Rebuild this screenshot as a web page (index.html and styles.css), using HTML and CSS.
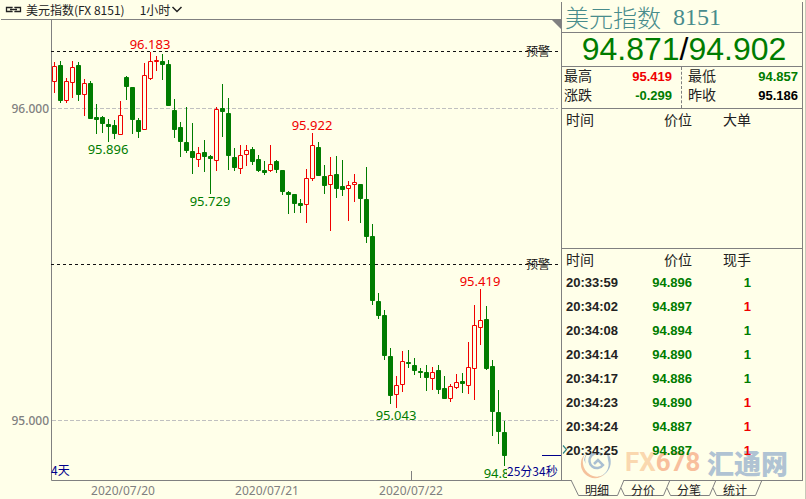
FILE: index.html
```html
<!DOCTYPE html>
<html lang="zh-CN">
<head>
  <meta charset="UTF-8">
  <meta name="viewport" content="width=device-width, initial-scale=1.0">
  <title>美元指数(FX 8151)</title>
  <link rel="stylesheet" href="styles.css">
</head>
<body>
  <div class="terminal">
    <main class="chart">
      <header class="chart-header">
        <svg class="link-icon" width="17" height="7" viewBox="0 0 17 7">
          <path d="M7 2V1.500H1.500V5.500H7V5M10 2V1.500H15.500V5.500H10V5M5 3.500H12" fill="none" stroke="#222" stroke-width="1.300"/>
        </svg>
        <span>美元指数(FX 8151)</span>
        <label class="period">
          <select class="period-select" aria-label="周期">
            <option>1小时</option>
          </select>
          <svg width="12" height="7" viewBox="0 0 12 7">
            <path d="M1.500 1L6 5.500L10.500 1" fill="none" stroke="#222" stroke-width="1.500"/>
          </svg>
        </label>
      </header>

      <svg class="plot" viewBox="0 20 561 479">
        <path class="axis" d="M51.500 20V480.500H561"/>
        <path class="axis" d="M411.500 471V480"/>
        <path d="M552 20H561V29Z" fill="#808080"/>
        <path class="grid-line" d="M52 108.500H558M52 420.500H558"/>
        <path class="alert-line" d="M51 51.500H558M51 264.500H558"/>
        <g id="candles"></g>

        <text class="alert-text" x="526" y="56">预警</text>
        <text class="alert-text" x="526" y="269">预警</text>

        <text class="mark up" x="150" y="49">96.183</text>
        <text class="mark down" x="108" y="154">95.896</text>
        <text class="mark down" x="210" y="206">95.729</text>
        <text class="mark up" x="312" y="130">95.922</text>
        <text class="mark up" x="480" y="286">95.419</text>
        <text class="mark down" x="396" y="420">95.043</text>
        <text class="mark down" x="504" y="478">94.857</text>
        <path d="M507 466H560V479H507Z" fill="#ffffe9"/>

        <path d="M542 455.500H561" stroke="#00008b"/>
        <text class="note" x="51" y="475">4天</text>
        <text class="note" x="507" y="476">25分34秒</text>

        <text class="price-label" x="49" y="113">96.000</text>
        <text class="price-label" x="49" y="425">95.000</text>
        <text class="date-label" x="123" y="495">2020/07/20</text>
        <text class="date-label" x="267" y="495">2020/07/21</text>
        <text class="date-label" x="411" y="495">2020/07/22</text>
      </svg>
    </main>

    <aside class="side">
      <div class="quote">
        <h1 class="symbol"><span>美元指数</span><span class="code">8151</span></h1>
        <div class="bid-ask"><span class="down">94.871</span>/<span class="down">94.902</span></div>

        <div class="stats">
          <dl class="stat-list">
            <dt>最高</dt><dd class="up">95.419</dd>
            <dt>涨跌</dt><dd class="down">-0.299</dd>
          </dl>
          <dl class="stat-list">
            <dt>最低</dt><dd class="down">94.857</dd>
            <dt>昨收</dt><dd>95.186</dd>
          </dl>
        </div>

        <section class="big-orders">
          <table class="ticks">
            <thead>
              <tr><th>时间</th><th>价位</th><th>大单</th></tr>
            </thead>
          </table>
        </section>

        <section class="details">
          <div class="watermark">
            <svg width="34" height="34" viewBox="0 0 34 34">
              <path d="M5 9A15 15 0 0 0 13 31Q19 33 25 29A14 14 0 0 1 5 9Z" fill="#e8682c"/>
              <path d="M21 3A15 15 0 0 1 17 32A13 13 0 0 0 28 15A14 14 0 0 0 21 3Z" fill="#2c62b0"/>
              <path d="M4 15A13 13 0 0 1 20 4A11.500 11.500 0 0 0 6 19Z" fill="#2c62b0"/>
              <path d="M22 10A7.500 7.500 0 1 0 23 20L18 15L14 19" fill="none" stroke="#2c62b0" stroke-width="2.500"/>
            </svg>
            <span class="wm-code"><span>FX</span><span class="wm-num">678</span></span>
            <span class="wm-name">汇通网</span>
          </div>
          <table class="ticks">
            <thead>
              <tr><th>时间</th><th>价位</th><th>现手</th></tr>
            </thead>
            <tbody>
              <tr><td>20:33:59</td><td class="down">94.896</td><td class="down">1</td></tr>
              <tr><td>20:34:02</td><td class="down">94.897</td><td class="up">1</td></tr>
              <tr><td>20:34:08</td><td class="down">94.894</td><td class="down">1</td></tr>
              <tr><td>20:34:14</td><td class="down">94.890</td><td class="down">1</td></tr>
              <tr><td>20:34:17</td><td class="down">94.886</td><td class="down">1</td></tr>
              <tr><td>20:34:23</td><td class="down">94.890</td><td class="up">1</td></tr>
              <tr><td>20:34:24</td><td class="down">94.887</td><td class="up">1</td></tr>
              <tr><td>20:34:25</td><td class="down">94.887</td><td class="up">1</td></tr>
            </tbody>
          </table>
          <svg class="latest-arrow" width="6" height="9" viewBox="0 0 6 9">
            <path d="M1 .5L4.500 4.500L1 8.500" fill="none" stroke="#2f8585" stroke-width="1.200"/>
          </svg>
        </section>
      </div>

      <nav class="tabs">
        <button type="button" class="tab">
          <svg class="tab-shape" width="54" height="16" viewBox="0 0 54 16">
            <path d="M0 0L7.500 15.500H46.500L53 0Z" fill="#ffffe9"/>
            <path d="M0 0L7.500 15.500H46.500L53 0" fill="none" stroke="#808080"/>
          </svg>
          <span>明细</span>
        </button>
        <button type="button" class="tab">
          <svg class="tab-shape" width="54" height="16" viewBox="0 0 54 16">
            <path d="M4 8L7.500 15.500H46.500L53 0" fill="none" stroke="#808080"/>
          </svg>
          <span>分价</span>
        </button>
        <button type="button" class="tab">
          <svg class="tab-shape" width="54" height="16" viewBox="0 0 54 16">
            <path d="M4 8L7.500 15.500H46.500L53 0" fill="none" stroke="#808080"/>
          </svg>
          <span>分笔</span>
        </button>
        <button type="button" class="tab">
          <svg class="tab-shape" width="54" height="16" viewBox="0 0 54 16">
            <path d="M4 8L7.500 15.500H46.500L53 0" fill="none" stroke="#808080"/>
          </svg>
          <span>统计</span>
        </button>
      </nav>
    </aside>
  </div>

  <script src="script.js"></script>
</body>
</html>
```

FILE: styles.css
```css
* {
  box-sizing: border-box;
}

body {
  margin: 0;
  background-color: #ffffe9;
  color: #222;
  font-family: "Liberation Sans", "Noto Sans CJK SC", sans-serif;
  font-size: 14px;
}

.terminal {
  display: grid;
  grid-template-columns: 1fr 245px;
}

.up {
  color: #f00000;
  fill: #f00000;
}

.down {
  color: #007c00;
  fill: #007c00;
}

/* chart */
.chart-header {
  display: flex;
  align-items: center;
  height: 20px;
  margin-left: 1px;
  padding-left: 4px;
  border-bottom: 1px solid #808080;
  font-family: "Noto Sans CJK SC", sans-serif;
  font-size: 12px;
  line-height: 19px;
}

.link-icon {
  margin-right: 4px;
}

.period {
  display: flex;
  align-items: center;
  margin-left: 15px;
}

.period-select {
  appearance: none;
  width: 31px;
  padding: 0;
  border: none;
  background: none;
  color: inherit;
  font: inherit;
}

.plot {
  display: block;
  width: 100%;
}

.axis {
  fill: none;
  stroke: #808080;
}

.grid-line {
  stroke: #c0c0c0;
  stroke-dasharray: 4 2;
}

.alert-line {
  stroke: #111;
  stroke-dasharray: 3 3;
}

.mark {
  font-family: "Noto Sans", sans-serif;
  font-size: 13px;
  text-anchor: middle;
}

.alert-text {
  fill: #111;
  font-family: "Noto Sans CJK SC", sans-serif;
  font-size: 12px;
}

.note {
  fill: #00008b;
  font-family: "Noto Sans CJK SC", sans-serif;
  font-size: 12px;
}

.price-label {
  fill: #808080;
  font-family: "Noto Sans", sans-serif;
  font-size: 12px;
  font-weight: 500;
  text-anchor: end;
}

.date-label {
  fill: #808080;
  font-family: "Noto Sans", sans-serif;
  font-size: 12px;
  text-anchor: middle;
}

.candle-up {
  fill: #ffffe9;
  stroke: #f00000;
}

.candle-down {
  fill: #007c00;
  stroke: #007c00;
}

/* quote panel */
.side {
  padding-right: 2px;
  border-right: 1px solid #c8c8b8;
}

.quote {
  margin-top: 2px;
  border-left: 1px solid #808080;
  border-right: 1px solid #808080;
  border-bottom: 1px solid #808080;
}

.symbol {
  display: flex;
  gap: 12px;
  margin: 0;
  padding-left: 3px;
  border-bottom: 1px solid #808080;
  color: #488c8c;
  font-family: "Noto Sans CJK SC", sans-serif;
  font-size: 24px;
  font-weight: 300;
  line-height: 30px;
}

.code {
  font-family: "Liberation Serif", serif;
}

.bid-ask {
  padding-left: 4px;
  border-bottom: 1px solid #808080;
  color: #000;
  font-size: 32px;
  line-height: 33px;
  text-align: center;
}

.stats {
  display: grid;
  grid-template-columns: 1fr 1fr;
  border-bottom: 1px solid #808080;
}

.stat-list {
  display: grid;
  grid-template-columns: auto 1fr;
  margin: 0;
  padding: 0 4px 3px 6px;
  line-height: 19px;
}

.stat-list:first-child {
  padding: 0 9px 3px 2px;
  border-right: 1px dashed #808080;
}

.stat-list dd {
  margin: 0;
  font-size: 13px;
  font-weight: bold;
  text-align: right;
}

.stat-list dd:not([class]) {
  color: #000;
}

.big-orders {
  height: 140px;
  border-bottom: 1px solid #808080;
}

.details {
  position: relative;
  padding-bottom: 17px;
}

.ticks {
  position: relative;
  width: 189px;
  border-collapse: collapse;
  table-layout: fixed;
}

.ticks th {
  height: 22px;
  padding: 0;
  font-weight: normal;
  line-height: 22px;
  text-align: right;
}

.ticks td {
  height: 24px;
  padding: 0;
  font-size: 13px;
  font-weight: bold;
  line-height: 22px;
  text-align: right;
}

.ticks th:first-child,
.ticks td:first-child {
  width: 70px;
  padding-left: 4px;
  text-align: left;
}

.ticks th:nth-child(2) {
  width: 60px;
}

.latest-arrow {
  position: absolute;
  left: 0;
  bottom: 26px;
}

.watermark {
  position: absolute;
  left: 18px;
  bottom: 0;
  display: flex;
  align-items: center;
  height: 36px;
  opacity: 0.4;
  white-space: nowrap;
}

.wm-code {
  width: 74px;
  margin-left: 11px;
  color: #f5a05a;
  font-family: Roboto, sans-serif;
  font-size: 26px;
  font-weight: bold;
}

.wm-num {
  color: #f0602c;
}

.wm-name {
  margin-left: 8px;
  color: #3b6cb4;
  font-family: "Noto Sans CJK SC", sans-serif;
  font-size: 27px;
  font-weight: 900;
}

/* tabs */
.tabs {
  display: flex;
  padding-left: 10px;
}

.tab {
  position: relative;
  width: 46px;
  height: 16px;
  padding: 0 0 0 6px;
  border: none;
  background: none;
  color: #222;
  font-family: "Noto Sans CJK SC", sans-serif;
  font-size: 12px;
  line-height: 15px;
  text-align: center;
}

.tab span {
  position: relative;
}

.tab-shape {
  position: absolute;
  left: 0;
  top: -1px;
}
```

FILE: script.js
```js
// [high, low, body top, body bottom, rising]
var candles = [
  [62, 93, 66, 82, 1], [61, 103, 65, 101, 0], [78, 103, 81, 101, 1], [61, 98, 67, 83, 1],
  [62, 101, 65, 95, 0], [79, 116, 83, 95, 1], [81, 119, 83, 119, 0], [104, 134, 117, 120, 0],
  [116, 133, 117, 124, 0], [119, 142, 124, 127, 0], [120, 139, 125, 134, 0], [101, 135, 115, 135, 1],
  [76, 100, 77, 87, 0], [87, 134, 87, 120, 0], [118, 138, 120, 132, 0], [63, 130, 75, 130, 1],
  [52, 80, 61, 79, 1], [56, 71, 60, 62, 1], [54, 80, 61, 65, 0], [60, 106, 64, 106, 0],
  [99, 138, 110, 130, 0], [122, 157, 127, 142, 0], [107, 153, 142, 151, 0], [123, 174, 151, 158, 0],
  [147, 167, 153, 160, 1], [140, 172, 152, 157, 0], [155, 194, 156, 159, 0], [107, 171, 109, 161, 1],
  [84, 137, 108, 112, 0], [98, 170, 113, 156, 0], [148, 171, 157, 168, 0], [145, 174, 155, 169, 1],
  [145, 166, 150, 155, 1], [147, 165, 149, 162, 0], [155, 172, 159, 171, 0], [161, 175, 170, 173, 0],
  [145, 172, 164, 171, 1], [160, 173, 161, 170, 0], [170, 195, 170, 192, 0], [191, 214, 192, 195, 0],
  [194, 213, 194, 204, 0], [199, 213, 203, 206, 0], [169, 223, 178, 205, 1], [133, 181, 145, 179, 1],
  [142, 176, 147, 176, 0], [165, 194, 176, 186, 0], [157, 231, 175, 185, 1], [156, 198, 174, 189, 0],
  [160, 196, 186, 190, 0], [181, 221, 185, 189, 1], [174, 202, 182, 185, 1], [184, 223, 184, 199, 0],
  [167, 243, 199, 237, 0], [224, 305, 236, 301, 0], [293, 319, 301, 316, 0], [310, 360, 315, 356, 0],
  [348, 404, 356, 396, 0], [376, 408, 385, 395, 1], [351, 392, 361, 385, 1], [350, 368, 362, 364, 0],
  [358, 375, 365, 371, 0], [368, 378, 371, 373, 0], [365, 391, 372, 378, 0], [367, 390, 372, 379, 1],
  [365, 394, 370, 390, 0], [376, 399, 388, 399, 0], [384, 402, 386, 399, 1], [374, 389, 382, 388, 1],
  [373, 393, 381, 384, 0], [342, 394, 367, 386, 1], [305, 400, 325, 369, 1], [289, 345, 320, 328, 1],
  [306, 370, 319, 369, 0], [360, 436, 366, 412, 0], [390, 444, 412, 432, 0], [421, 466, 432, 456, 0]
];

var svgNS = 'http://www.w3.org/2000/svg';
var group = document.getElementById('candles');

function addPath(cls, d) {
  var path = document.createElementNS(svgNS, 'path');
  path.setAttribute('class', cls);
  path.setAttribute('d', d);
  group.appendChild(path);
}

candles.forEach(function (c, i) {
  var x = 54 + i * 6;
  var cls = c[4] ? 'candle-up' : 'candle-down';
  addPath(cls, 'M' + (x + 0.5) + ' ' + c[0] + 'V' + c[1]);
  addPath(cls, 'M' + (x - 1.5) + ' ' + (c[2] + 0.5) + 'H' + (x + 2.5) + 'V' + (c[3] - 0.5) + 'H' + (x - 1.5) + 'Z');
});
```
